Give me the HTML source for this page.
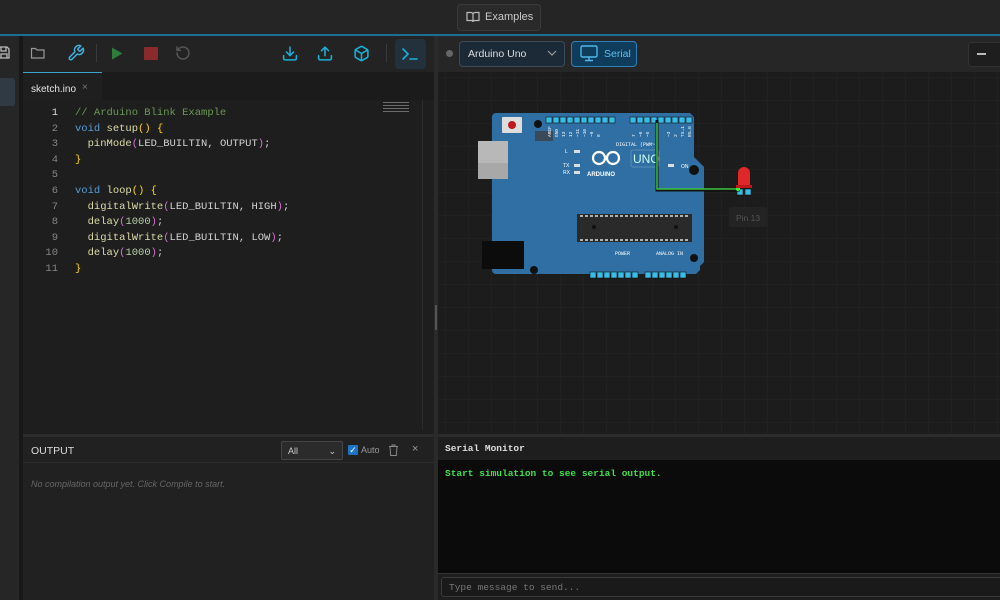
<!DOCTYPE html>
<html><head><meta charset="utf-8"><style>
*{box-sizing:border-box;margin:0;padding:0}
body{width:1000px;height:600px;overflow:hidden;background:#1e1e1e;font-family:"Liberation Sans",sans-serif;color:#ccc;position:relative}
.abs{position:absolute}
.mono{font-family:"Liberation Mono",monospace}
.code div{height:15.6px;line-height:15.6px;white-space:pre}
</style></head><body>
<!-- top bar -->
<div class="abs" style="left:0;top:0;width:1000px;height:34px;background:#252526"></div>
<div class="abs" style="left:457px;top:4px;width:84px;height:27px;border:1px solid #3a3a3a;border-radius:4px;background:#2a2a2a;font-size:11px;color:#c8c8c8;line-height:25px;padding-left:27px">Examples</div>
<svg class="abs" style="left:466px;top:11px" width="14" height="12" viewBox="0 0 14 12" fill="none" stroke="#bbb" stroke-width="1.2"><path d="M1 1.5h4a2 2 0 0 1 2 2V11a1.5 1.5 0 0 0-1.5-1.5H1z M13 1.5H9a2 2 0 0 0-2 2V11a1.5 1.5 0 0 1 1.5-1.5H13z"/></svg>
<div class="abs" style="left:0;top:34px;width:1000px;height:2px;background:#1b6e94"></div>

<!-- left sidebar -->
<div class="abs" style="left:0;top:36px;width:19px;height:564px;background:#262626"></div>
<div class="abs" style="left:19px;top:36px;width:4px;height:564px;background:#181818"></div>
<div class="abs" style="left:0;top:78px;width:15px;height:28px;background:#2f3a45;border-radius:0 3px 3px 0"></div>
<svg class="abs" style="left:0;top:45px" width="10" height="15" viewBox="0 0 10 15" fill="none" stroke="#bbb" stroke-width="1.3"><path d="M-2 2h9l2 2v9h-11z M1 2v4h5V2 M1 13V9h6v4"/></svg>

<!-- editor toolbar -->
<div class="abs" style="left:23px;top:36px;width:411px;height:36px;background:#232323"></div>
<svg class="abs" style="left:30px;top:46px" width="16" height="14" viewBox="0 0 16 14" fill="none" stroke="#999" stroke-width="1.2"><path d="M1.5 2.5h4l1.5 1.5h7v8h-12.5z"/></svg>
<svg class="abs" style="left:67px;top:44px" width="18" height="18" viewBox="0 0 24 24" fill="none" stroke="#3fb0e0" stroke-width="2" stroke-linecap="round" stroke-linejoin="round"><path d="M14.7 6.3a1 1 0 0 0 0 1.4l1.6 1.6a1 1 0 0 0 1.4 0l3.77-3.77a6 6 0 0 1-7.940 7.94l-6.91 6.91a2.12 2.12 0 0 1-3-3l6.91-6.91a6 6 0 0 1 7.94-7.94l-3.76 3.76z"/></svg>
<div class="abs" style="left:96px;top:44px;width:1px;height:18px;background:#3a3a3a"></div>
<svg class="abs" style="left:111px;top:47px" width="12" height="13" viewBox="0 0 12 13"><path d="M1 0.5L11.5 6.5L1 12.5z" fill="#2f7d3a"/></svg>
<div class="abs" style="left:144px;top:47px;width:14px;height:13px;background:#8a2a2a;border-radius:1px"></div>
<svg class="abs" style="left:175px;top:45px" width="16" height="16" viewBox="0 0 24 24" fill="none" stroke="#555" stroke-width="2.2" stroke-linecap="round"><path d="M3 12a9 9 0 1 0 9-9 9.75 9.75 0 0 0-6.74 2.74L3 8 M3 3v5h5"/></svg>
<svg class="abs" style="left:281px;top:45px" width="18" height="17" viewBox="0 0 24 24" fill="none" stroke="#1ab0d8" stroke-width="2.2" stroke-linecap="round" stroke-linejoin="round"><path d="M21 15v4a2 2 0 0 1-2 2H5a2 2 0 0 1-2-2v-4 M7 10l5 5 5-5 M12 15V3"/></svg>
<svg class="abs" style="left:316px;top:45px" width="18" height="17" viewBox="0 0 24 24" fill="none" stroke="#1ab0d8" stroke-width="2.2" stroke-linecap="round" stroke-linejoin="round"><path d="M21 15v4a2 2 0 0 1-2 2H5a2 2 0 0 1-2-2v-4 M17 8l-5-5-5 5 M12 3v12"/></svg>
<svg class="abs" style="left:353px;top:45px" width="17" height="17" viewBox="0 0 24 24" fill="none" stroke="#1ab0d8" stroke-width="2.2" stroke-linejoin="round"><path d="M21 16V8a2 2 0 0 0-1-1.73l-7-4a2 2 0 0 0-2 0l-7 4A2 2 0 0 0 3 8v8a2 2 0 0 0 1 1.73l7 4a2 2 0 0 0 2 0l7-4A2 2 0 0 0 21 16z M3.3 7L12 12l8.7-5 M12 22V12"/></svg>
<div class="abs" style="left:386px;top:44px;width:1px;height:18px;background:#3a3a3a"></div>
<div class="abs" style="left:395px;top:39px;width:31px;height:30px;background:#23313d;border-radius:4px"></div>
<svg class="abs" style="left:401px;top:47px" width="18" height="14" viewBox="0 0 18 14" fill="none" stroke="#1ab0d8" stroke-width="1.6" stroke-linecap="round"><path d="M2 2l5 5-5 5 M9 12h7"/></svg>

<!-- tabs -->
<div class="abs" style="left:23px;top:72px;width:411px;height:28px;background:#1b1b1b"></div>
<div class="abs" style="left:23px;top:72px;width:79px;height:28px;background:#1f1f1f;border-top:1.5px solid #3ba3d0"></div>
<div class="abs" style="left:31px;top:84px;font-size:10px;color:#e6e6e6">sketch.ino</div>
<div class="abs" style="left:82px;top:82px;font-size:10px;color:#777">×</div>

<!-- code -->
<div class="abs" style="left:23px;top:100px;width:410px;height:334px;background:#1e1e1e"></div>
<div class="abs" style="left:422px;top:100px;width:1px;height:330px;background:#2c2c2c"></div>
<div class="abs" style="left:383px;top:102px;width:26px;height:10px;opacity:.45;background:repeating-linear-gradient(#ccc 0 1px,transparent 1px 3px)"></div>
<div class="abs mono code" style="left:36px;top:106px;width:22px;text-align:right;font-size:10.5px;color:#858585">
<div style="color:#ddd">1</div><div>2</div><div>3</div><div>4</div><div>5</div><div>6</div><div>7</div><div>8</div><div>9</div><div>10</div><div>11</div></div>
<div class="abs mono code" style="left:75px;top:106px;font-size:10.5px;color:#d4d4d4">
<div style="color:#6a9955">// Arduino Blink Example</div>
<div><span style="color:#569cd6">void</span> <span style="color:#dcdcaa">setup</span><span style="color:#ffd700">()</span> <span style="color:#ffd700">{</span></div>
<div>  <span style="color:#dcdcaa">pinMode</span><span style="color:#da70d6">(</span>LED_BUILTIN, OUTPUT<span style="color:#da70d6">)</span>;</div>
<div><span style="color:#ffd700">}</span></div>
<div> </div>
<div><span style="color:#569cd6">void</span> <span style="color:#dcdcaa">loop</span><span style="color:#ffd700">()</span> <span style="color:#ffd700">{</span></div>
<div>  <span style="color:#dcdcaa">digitalWrite</span><span style="color:#da70d6">(</span>LED_BUILTIN, HIGH<span style="color:#da70d6">)</span>;</div>
<div>  <span style="color:#dcdcaa">delay</span><span style="color:#da70d6">(</span><span style="color:#b5cea8">1000</span><span style="color:#da70d6">)</span>;</div>
<div>  <span style="color:#dcdcaa">digitalWrite</span><span style="color:#da70d6">(</span>LED_BUILTIN, LOW<span style="color:#da70d6">)</span>;</div>
<div>  <span style="color:#dcdcaa">delay</span><span style="color:#da70d6">(</span><span style="color:#b5cea8">1000</span><span style="color:#da70d6">)</span>;</div>
<div><span style="color:#ffd700">}</span></div></div>

<!-- vertical divider -->
<div class="abs" style="left:434px;top:36px;width:4px;height:564px;background:#2a2a2a"></div>
<div class="abs" style="left:435px;top:305px;width:2px;height:25px;background:#555"></div>

<!-- right toolbar -->
<div class="abs" style="left:438px;top:36px;width:562px;height:36px;background:#262626"></div>
<div class="abs" style="left:446px;top:50px;width:7px;height:7px;border-radius:50%;background:#666"></div>
<div class="abs" style="left:459px;top:41px;width:106px;height:26px;border:1px solid #3a4a5a;border-radius:4px;background:#1c2a38;font-size:10.5px;color:#ddd;line-height:24px;padding-left:8px">Arduino Uno</div>
<svg class="abs" style="left:547px;top:50px" width="10" height="6" viewBox="0 0 10 6" fill="none" stroke="#999" stroke-width="1.2"><path d="M1 1l4 4 4-4"/></svg>
<div class="abs" style="left:571px;top:41px;width:66px;height:26px;border:1px solid #2f7fb8;border-radius:4px;background:#103c5c;font-size:10.5px;color:#5cc0f0;line-height:24px;padding-left:32px">Serial</div>
<svg class="abs" style="left:580px;top:45px" width="18" height="17" viewBox="0 0 18 17" fill="none" stroke="#4ab8ec" stroke-width="1.4"><rect x="1" y="1" width="16" height="11" rx="1.5"/><path d="M9 12v3 M5 15.5h8"/></svg>
<div class="abs" style="left:968px;top:42px;width:40px;height:25px;border:1px solid #333;border-radius:4px;background:#1e1e1e"></div>
<div class="abs" style="left:977px;top:53px;width:9px;height:1.5px;background:#bbb"></div>

<!-- canvas -->
<div class="abs" style="left:438px;top:72px;width:562px;height:362px;background-color:#1c1c1c;background-image:linear-gradient(90deg,#212121 1px,transparent 1px),linear-gradient(#212121 1px,transparent 1px);background-size:23px 23px;background-position:7px 5px"></div>

<svg class="abs" style="left:478px;top:110px" width="300" height="175" viewBox="478 110 300 175">
<path d="M494 113h196l4 4v40l10 10v95l-4 4v4l-4 4h-200a4 4 0 0 1-4-4v-153a4 4 0 0 1 4-4z" fill="#2f6fa3"/>
<rect x="478" y="141" width="30" height="38" fill="#a8a8a8"/><rect x="478" y="141" width="30" height="22" fill="#b8b8b8"/>
<rect x="482" y="241" width="42" height="28" fill="#0c0c0c"/>
<rect x="502" y="117" width="20" height="16" rx="1" fill="#ddd"/><circle cx="512" cy="125" r="4" fill="#c0181c"/>
<circle cx="538" cy="124" r="4" fill="#111"/><circle cx="694" cy="170" r="5" fill="#111"/><circle cx="534" cy="270" r="4" fill="#111"/><circle cx="694" cy="258" r="4" fill="#111"/>
<g fill="#3a4a5a"><rect x="535" y="131" width="18" height="10"/></g>
<g fill="#39bde8" stroke="#111" stroke-width=".6">
<rect x="546" y="117" width="6" height="6"/><rect x="553" y="117" width="6" height="6"/><rect x="560" y="117" width="6" height="6"/><rect x="567" y="117" width="6" height="6"/><rect x="574" y="117" width="6" height="6"/><rect x="581" y="117" width="6" height="6"/><rect x="588" y="117" width="6" height="6"/><rect x="595" y="117" width="6" height="6"/><rect x="602" y="117" width="6" height="6"/><rect x="609" y="117" width="6" height="6"/><rect x="630" y="117" width="6" height="6"/><rect x="637" y="117" width="6" height="6"/><rect x="644" y="117" width="6" height="6"/><rect x="651" y="117" width="6" height="6"/><rect x="658" y="117" width="6" height="6"/><rect x="665" y="117" width="6" height="6"/><rect x="672" y="117" width="6" height="6"/><rect x="679" y="117" width="6" height="6"/><rect x="686" y="117" width="6" height="6"/>
<rect x="590" y="272" width="6" height="6"/><rect x="597" y="272" width="6" height="6"/><rect x="604" y="272" width="6" height="6"/><rect x="611" y="272" width="6" height="6"/><rect x="618" y="272" width="6" height="6"/><rect x="625" y="272" width="6" height="6"/><rect x="632" y="272" width="6" height="6"/><rect x="645" y="272" width="6" height="6"/><rect x="652" y="272" width="6" height="6"/><rect x="659" y="272" width="6" height="6"/><rect x="666" y="272" width="6" height="6"/><rect x="673" y="272" width="6" height="6"/><rect x="680" y="272" width="6" height="6"/>
<rect x="737" y="189" width="6" height="6"/><rect x="745" y="189" width="6" height="6"/></g>
<g fill="#fff" font-size="4.5" font-family="Liberation Mono">
<text transform="translate(551 137) rotate(-90)">AREF</text><text transform="translate(558 137) rotate(-90)">GND</text><text transform="translate(565 137) rotate(-90)">13</text><text transform="translate(572 137) rotate(-90)">12</text><text transform="translate(579 137) rotate(-90)">~11</text><text transform="translate(586 137) rotate(-90)">~10</text><text transform="translate(593 137) rotate(-90)">~9</text><text transform="translate(600 137) rotate(-90)">8</text><text transform="translate(635 137) rotate(-90)">7</text><text transform="translate(642 137) rotate(-90)">~6</text><text transform="translate(649 137) rotate(-90)">~5</text><text transform="translate(670 137) rotate(-90)">~3</text><text transform="translate(677 137) rotate(-90)">2</text><text transform="translate(684 137) rotate(-90)">TX→1</text><text transform="translate(691 137) rotate(-90)">RX←0</text>
</g>
<rect x="577" y="214" width="115" height="28" fill="#2a2a2a"/>
<path d="M580 216h110 M580 240h110" stroke="#ddd" stroke-width="1.4" stroke-dasharray="3 2"/>
<circle cx="594" cy="227" r="2" fill="#111"/><circle cx="676" cy="227" r="2" fill="#111"/>
<g fill="none" stroke="#fff" stroke-width="2.2"><circle cx="599" cy="158" r="6"/><circle cx="613" cy="158" r="6"/></g>
<rect x="631" y="150" width="28" height="17" rx="2" fill="none" stroke="#5a8cb5"/>
<text x="633" y="163" font-size="12" fill="#cfe" font-family="Liberation Sans">UNO</text>
<text x="587" y="176" font-size="6" fill="#fff" font-weight="bold" font-family="Liberation Sans">ARDUINO</text>
<text x="616" y="146" font-size="5" fill="#fff" font-family="Liberation Mono">DIGITAL (PWM~)</text>
<text x="615" y="255" font-size="5" fill="#fff" font-family="Liberation Mono">POWER</text>
<text x="656" y="255" font-size="5" fill="#fff" font-family="Liberation Mono">ANALOG IN</text>
<g fill="#ddd"><rect x="574" y="150" width="6" height="3"/><rect x="574" y="164" width="6" height="3"/><rect x="574" y="171" width="6" height="3"/><rect x="668" y="164" width="6" height="3"/></g>
<text x="565" y="153" font-size="5" fill="#fff">L</text><text x="563" y="167" font-size="5" fill="#fff">TX</text><text x="563" y="174" font-size="5" fill="#fff">RX</text><text x="681" y="168" font-size="5" fill="#fff">ON</text>
<path d="M657 120V190H740" stroke="#111" stroke-width="3" fill="none"/>
<path d="M657 123V189H740" stroke="#3ec43e" stroke-width="1.5" fill="none"/>
<circle cx="738" cy="189" r="2" fill="#3f3"/>
<path d="M738 187v-14a6 6 0 0 1 12 0v14z" fill="#e02828"/><rect x="736" y="185" width="16" height="3" fill="#c01818"/>
<rect x="729" y="207" width="38" height="20" rx="2" fill="#232323"/>
<text x="736" y="221" font-size="8.5" fill="#555" font-family="Liberation Sans">Pin 13</text>
</svg>

<!-- output panel -->
<div class="abs" style="left:23px;top:434px;width:411px;height:166px;background:#212121"></div>
<div class="abs" style="left:23px;top:434px;width:411px;height:3px;background:#2c2c2c"></div>
<div class="abs" style="left:23px;top:462px;width:411px;height:1px;background:#2d2d2d"></div>
<div class="abs" style="left:31px;top:445px;font-size:10.5px;color:#ddd">OUTPUT</div>
<div class="abs" style="left:281px;top:441px;width:62px;height:19px;border:1px solid #444;border-radius:2px;background:#2b2b2b;font-size:9px;color:#ccc;padding:4px 6px">All<span style="float:right">⌄</span></div>
<div class="abs" style="left:348px;top:445px;width:10px;height:10px;background:#1f73c4;border-radius:1px;color:#fff;font-size:9px;line-height:10px;text-align:center">✓</div>
<div class="abs" style="left:361px;top:445px;font-size:9px;color:#999">Auto</div>
<svg class="abs" style="left:388px;top:444px" width="11" height="12" viewBox="0 0 11 12" fill="none" stroke="#888" stroke-width="1"><path d="M1 2.5h9 M4 2.5V1h3v1.5 M2 2.5l.7 9h5.6l.7-9"/></svg>
<div class="abs" style="left:412px;top:443px;font-size:11px;color:#999">×</div>
<div class="abs" style="left:31px;top:479px;font-size:9px;color:#666;font-style:italic">No compilation output yet. Click Compile to start.</div>

<!-- serial monitor -->
<div class="abs" style="left:438px;top:434px;width:562px;height:166px;background:#1e1e1e"></div>
<div class="abs" style="left:438px;top:434px;width:562px;height:3px;background:#2c2c2c"></div>
<div class="abs mono" style="left:445px;top:443px;font-size:9.5px;color:#ddd;font-weight:bold">Serial Monitor</div>
<div class="abs" style="left:438px;top:460px;width:562px;height:113px;background:#0b0b0b"></div>
<div class="abs mono" style="left:445px;top:468px;font-size:9.5px;color:#3ee04c;font-weight:bold">Start simulation to see serial output.</div>
<div class="abs" style="left:438px;top:573px;width:562px;height:1px;background:#333"></div>
<div class="abs" style="left:441px;top:577px;width:570px;height:20px;border:1px solid #3a3a3a;border-radius:3px;background:#1a1a1a"></div>
<div class="abs mono" style="left:449px;top:582px;font-size:9.5px;color:#777">Type message to send...</div>
</body></html>
